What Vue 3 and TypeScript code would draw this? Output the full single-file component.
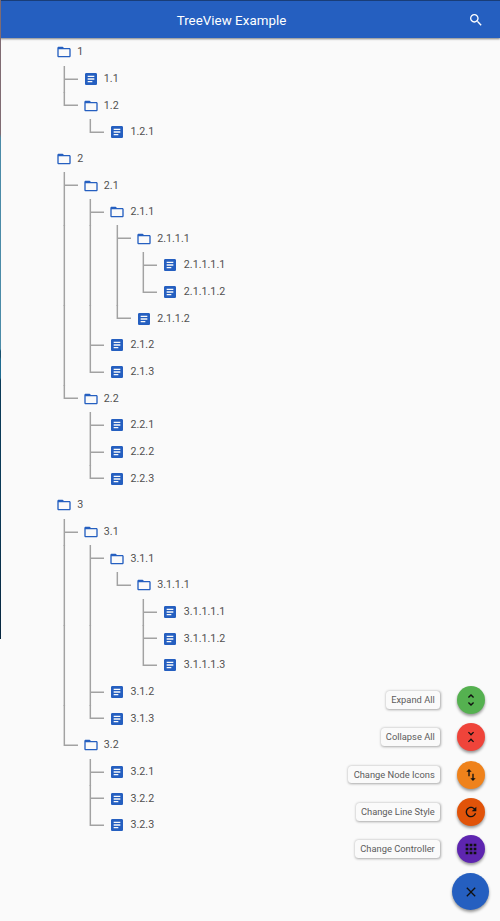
<script setup lang="ts">
interface TreeNode {
  label: string
  children?: TreeNode[]
}

type Guide = 'blank' | 'line' | 'branch' | 'corner'

interface Row {
  label: string
  folder: boolean
  guides: Guide[]
}

interface Action {
  label: string
  color: string
  path: string
}

const leaf = (label: string): TreeNode => ({ label })

const tree: TreeNode[] = [
  { label: '1', children: [leaf('1.1'), { label: '1.2', children: [leaf('1.2.1')] }] },
  {
    label: '2',
    children: [
      {
        label: '2.1',
        children: [
          {
            label: '2.1.1',
            children: [
              { label: '2.1.1.1', children: [leaf('2.1.1.1.1'), leaf('2.1.1.1.2')] },
              leaf('2.1.1.2'),
            ],
          },
          leaf('2.1.2'),
          leaf('2.1.3'),
        ],
      },
      { label: '2.2', children: [leaf('2.2.1'), leaf('2.2.2'), leaf('2.2.3')] },
    ],
  },
  {
    label: '3',
    children: [
      {
        label: '3.1',
        children: [
          {
            label: '3.1.1',
            children: [
              {
                label: '3.1.1.1',
                children: [leaf('3.1.1.1.1'), leaf('3.1.1.1.2'), leaf('3.1.1.1.3')],
              },
            ],
          },
          leaf('3.1.2'),
          leaf('3.1.3'),
        ],
      },
      { label: '3.2', children: [leaf('3.2.1'), leaf('3.2.2'), leaf('3.2.3')] },
    ],
  },
]

function flatten(nodes: TreeNode[], inherited: Guide[], root: boolean): Row[] {
  return nodes.flatMap((node, i) => {
    const last = i === nodes.length - 1
    const guides: Guide[] = root ? [] : [...inherited, last ? 'corner' : 'branch']
    const below: Guide[] = root ? [] : [...inherited, last ? 'blank' : 'line']
    const row: Row = { label: node.label, folder: !!node.children, guides }
    return [row, ...flatten(node.children ?? [], below, false)]
  })
}

const rows = flatten(tree, [], true)

const guidePaths: Record<Guide, string> = {
  blank: '',
  line: 'M20 0V40.5',
  branch: 'M20 0V40.5M20 20H40.5',
  corner: 'M20 0V20H40.5',
}

const folderPath =
  'M20 6h-8l-2-2H4c-1.1 0-1.99.9-1.99 2L2 18c0 1.1.9 2 2 2h16c1.1 0 2-.9 2-2V8c0-1.1-.9-2-2-2zm0 12H4V8h16v10z'
const articlePath =
  'M19 3H5c-1.1 0-2 .9-2 2v14c0 1.1.9 2 2 2h14c1.1 0 2-.9 2-2V5c0-1.1-.9-2-2-2zm-5 14H7v-2h7v2zm3-4H7v-2h10v2zm0-4H7V7h10v2z'

const actions: Action[] = [
  {
    label: 'Expand All',
    color: '#55b150',
    path: 'M12 5.83L15.17 9l1.41-1.41L12 3 7.41 7.59 8.83 9 12 5.83zm0 12.34L8.83 15l-1.41 1.41L12 21l4.59-4.59L15.17 15 12 18.17z',
  },
  {
    label: 'Collapse All',
    color: '#ef443a',
    path: 'M7.41 18.59L8.83 20 12 16.83 15.17 20l1.41-1.41L12 14l-4.59 4.59zm9.18-13.18L15.17 4 12 7.17 8.83 4 7.41 5.41 12 10l4.59-4.59z',
  },
  {
    label: 'Change Node Icons',
    color: '#ef821b',
    path: 'M16 17.01V10h-2v7.01h-3L15 21l4-3.99h-3zM9 3L5 6.99h3V14h2V6.99h3L9 3z',
  },
  {
    label: 'Change Line Style',
    color: '#e15309',
    path: 'M17.65 6.35C16.2 4.9 14.21 4 12 4c-4.42 0-7.99 3.58-7.99 8s3.57 8 7.99 8c3.73 0 6.84-2.55 7.73-6h-2.08c-.82 2.33-3.04 4-5.65 4-3.31 0-6-2.69-6-6s2.69-6 6-6c1.66 0 3.14.69 4.22 1.78L13 11h7V4l-2.35 2.35z',
  },
  {
    label: 'Change Controller',
    color: '#5e25b0',
    path: 'M4 8h4V4H4v4zm6 12h4v-4h-4v4zm-6 0h4v-4H4v4zm0-6h4v-4H4v4zm6 0h4v-4h-4v4zm6-10v4h4V4h-4zm-6 4h4V4h-4v4zm6 6h4v-4h-4v4zm0 6h4v-4h-4v4z',
  },
]
</script>

<template>
  <div class="screen">
    <div class="edge"></div>
    <header class="bar">
      <h1 class="title">TreeView Example</h1>
      <svg class="icon search" viewBox="0 0 24 24">
        <path
          d="M15.5 14h-.79l-.28-.27C15.41 12.59 16 11.11 16 9.5 16 5.91 13.09 3 9.5 3S3 5.91 3 9.5 5.91 16 9.5 16c1.61 0 3.09-.59 4.23-1.57l.27.28v.79l5 4.99L20.49 19l-4.99-5zm-6 0C7.01 14 5 11.99 5 9.5S7.01 5 9.5 5 14 7.01 14 9.5 11.99 14 9.5 14z"
        />
      </svg>
    </header>

    <main class="tree">
      <div v-for="row in rows" :key="row.label" class="row">
        <svg v-for="(guide, i) in row.guides" :key="i" class="guide" viewBox="0 0 40 40">
          <path :d="guidePaths[guide]" />
        </svg>
        <span class="slot">
          <svg class="icon" viewBox="0 0 24 24">
            <path :d="row.folder ? folderPath : articlePath" />
          </svg>
        </span>
        <span class="label">{{ row.label }}</span>
      </div>
    </main>

    <div class="dial">
      <div v-for="action in actions" :key="action.label" class="action">
        <span class="chip">{{ action.label }}</span>
        <button class="fab" :style="{ backgroundColor: action.color }" :aria-label="action.label">
          <svg class="icon" viewBox="0 0 24 24"><path :d="action.path" /></svg>
        </button>
      </div>
      <button class="fab main" aria-label="Close">
        <svg class="icon" viewBox="0 0 24 24">
          <path
            d="M19 6.41L17.59 5 12 10.59 6.41 5 5 6.41 10.59 12 5 17.59 6.41 19 12 13.41 17.59 19 19 17.59 13.41 12z"
          />
        </svg>
      </button>
    </div>
  </div>
</template>

<style>
body {
  margin: 0;
}
</style>

<style scoped>
.screen {
  position: relative;
  box-sizing: border-box;
  width: 500px;
  height: 921px;
  overflow: hidden;
  background: #fafafa;
  font-family: Roboto, 'Liberation Sans', sans-serif;
}

.edge {
  position: absolute;
  z-index: 2;
  left: 0;
  top: 0;
  width: 1px;
  height: 639px;
  background: linear-gradient(
    #7f6b72 0 134px,
    #4a8ba8 138px 349px,
    #17516f 351px 357px,
    #1e6b90 359px 378px,
    #0b3a58 380px 500px,
    #07263f
  );
}

.bar {
  position: relative;
  z-index: 1;
  box-sizing: border-box;
  display: grid;
  grid-template-columns: 1fr 50px;
  align-items: center;
  height: 38px;
  padding-left: 13px;
  border-top: 1px solid #193d78;
  background: #255fc0;
  box-shadow: 0 1px 2px rgba(0, 0, 0, 0.5);
  color: #fff;
}

.title {
  margin: 3px 0 0;
  justify-self: center;
  font-size: 13.33px;
  line-height: 18px;
  font-weight: 400;
  letter-spacing: 0.04px;
  white-space: nowrap;
}

.icon {
  display: block;
  width: 16px;
  height: 16px;
  fill: currentColor;
}

.search {
  margin: 1px 0 0 18px;
}

.tree {
  padding-left: 50.52px;
  padding-top: 0.9px;
}

.row {
  display: flex;
  align-items: center;
  height: 26.667px;
}

.guide {
  flex: none;
  width: 26.667px;
  height: 26.667px;
  overflow: visible;
  fill: none;
  stroke: #a2a2a2;
  stroke-width: 2.2;
}

.slot {
  display: flex;
  flex: none;
  justify-content: center;
  width: 26.667px;
  color: #255fc0;
}

.label {
  color: #505050;
  font-size: 10.67px;
  line-height: 16px;
  letter-spacing: 0.03px;
}

.dial {
  position: absolute;
  right: 10.8px;
  bottom: 10.8px;
  display: flex;
  flex-direction: column;
  align-items: flex-end;
}

.action {
  display: flex;
  align-items: center;
  gap: 16.5px;
  height: 37.333px;
  margin-right: 4.6px;
}

.chip {
  box-sizing: border-box;
  height: 17.5px;
  padding: 0 5.33px;
  border-radius: 3.5px;
  background: #fafafa;
  box-shadow: 0.5px 0.7px 2.5px rgba(0, 0, 0, 0.32);
  color: #5c5c5c;
  font-size: 9.33px;
  line-height: 17.5px;
  white-space: nowrap;
}

.fab {
  display: flex;
  align-items: center;
  justify-content: center;
  width: 28px;
  height: 28px;
  padding: 0;
  border: 0;
  border-radius: 50%;
  box-shadow: 0 2px 3px rgba(0, 0, 0, 0.4);
  color: #111;
}

.main {
  width: 37.333px;
  height: 37.333px;
  margin-top: 5px;
  background: #255fc0;
}
</style>
